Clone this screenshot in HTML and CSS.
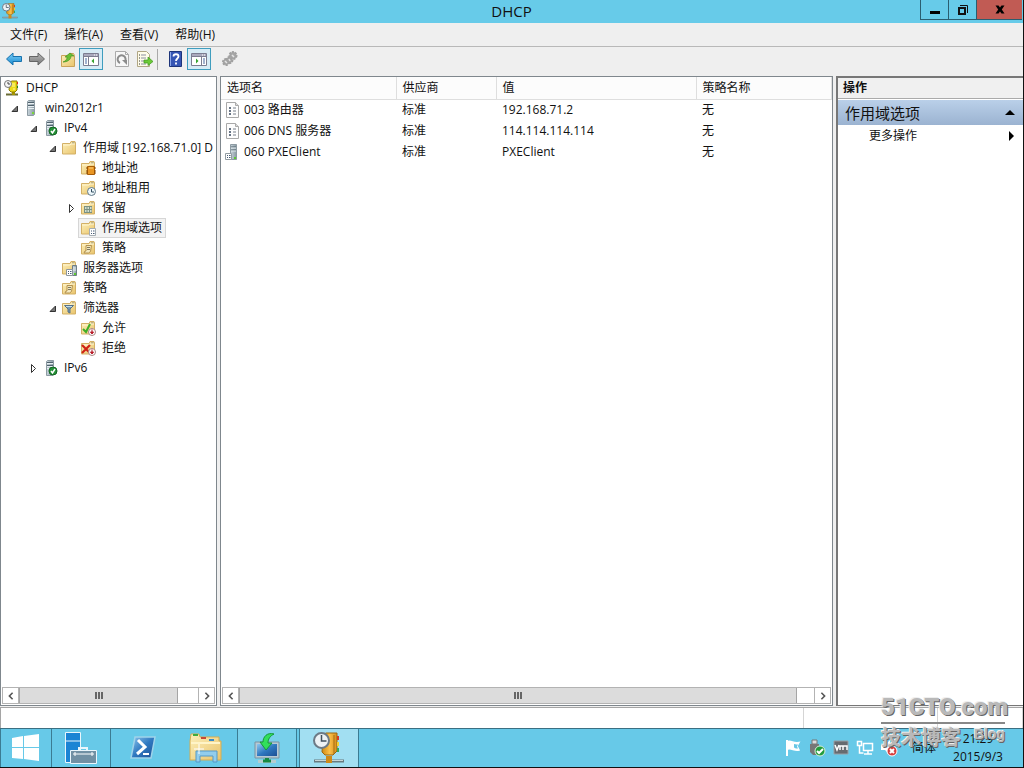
FILE: index.html
```html
<!DOCTYPE html>
<html lang="zh-CN">
<head>
<meta charset="utf-8">
<title>DHCP</title>
<link rel="stylesheet" href="styles.css">
</head>
<body>
<svg class="defs" aria-hidden="true">
  <defs>
    <linearGradient id="gold" x1="0" y1="0" x2="1" y2="1"><stop offset="0" stop-color="#fdf0bb"/><stop offset="1" stop-color="#e9c46c"/></linearGradient>
    <linearGradient id="steel" x1="0" y1="0" x2="1" y2="0"><stop offset="0" stop-color="#c9d5dc"/><stop offset="1" stop-color="#8a9aa3"/></linearGradient>
    <linearGradient id="amber" x1="0" y1="0" x2="1" y2="0"><stop offset="0" stop-color="#d08a12"/><stop offset=".5" stop-color="#fbc04a"/><stop offset="1" stop-color="#d58d1a"/></linearGradient>
    <linearGradient id="blue" x1="0" y1="0" x2="1" y2="1"><stop offset="0" stop-color="#8fc7ee"/><stop offset=".5" stop-color="#2f78c0"/><stop offset="1" stop-color="#1c4f94"/></linearGradient>
    <linearGradient id="sky" x1="0" y1="0" x2="0" y2="1"><stop offset="0" stop-color="#7fd0f8"/><stop offset="1" stop-color="#1488cf"/></linearGradient>
    <linearGradient id="grey" x1="0" y1="0" x2="0" y2="1"><stop offset="0" stop-color="#b8b8b8"/><stop offset="1" stop-color="#777"/></linearGradient>
  </defs>
  <symbol id="folder" viewBox="0 0 16 16"><path d="M1.500 3.500h7.500l1-2h4l.5 1.500v11h-13z" fill="url(#gold)" stroke="#d3b066"/><path d="M11 3h2.500" stroke="#8b8a72"/><path d="M2 5h7l1-1h4" stroke="#fff6d2" fill="none"/></symbol>
  <symbol id="server" viewBox="0 0 16 16"><path d="M4.500 1.500l1-1h6v14l-1 1h-6z" fill="url(#steel)" stroke="#8d9ba3"/><path d="M5 2.500h6M5 5.500h6" stroke="#50626d"/><path d="M5 3.500h6M5 6.500h6M5 8.500h6" stroke="#e8eff2"/><rect x="9" y="12" width="2" height="2" fill="#7ad63c"/></symbol>
  <symbol id="ok" viewBox="0 0 16 16"><circle cx="11" cy="11" r="4" fill="#259238" stroke="#126522"/><path d="M9 11l1.500 2 2.500-4" fill="none" stroke="#fff" stroke-width="1.500"/></symbol>
  <symbol id="server-ok" viewBox="0 0 16 16"><use href="#server" width="16" height="16"/><use href="#ok" width="16" height="16"/></symbol>
  <symbol id="dhcp" viewBox="0 0 32 32"><path d="M1 29h30" stroke="#687b80" stroke-width="3"/><path d="M2 28.500h28" stroke="#c7d6d8"/><path d="M13 24h6v7h-6z" fill="#cf8a18"/><path d="M10 3l3-2h11v18l-4 4h-8l-3-3z" fill="url(#amber)" stroke="#9a6612"/><path d="M21 3v19" stroke="#a36d12"/><path d="M24 4h2v4h-2z" fill="#d83a24"/><path d="M24 10h2v4h-2z" fill="#f1d234"/><path d="M24 16h2v4h-2z" fill="#35a85b"/><circle cx="8.500" cy="8.500" r="7.500" fill="#edf2f5" stroke="#6c7a86" stroke-width="2"/><path d="M8.500 3v6h5" stroke="#40505d" stroke-width="1.500" fill="none"/></symbol>
  <symbol id="dhcp-small" viewBox="0 0 16 16"><path d="M2 14.500h12" stroke="#6a6c36" stroke-width="2"/><path d="M8 11h3v4H8z" fill="#a49400"/><path d="M6 2l2-1h5v9l-2 2H7l-2-2z" fill="#eddb19" stroke="#8d7c00"/><path d="M8 4h3M8 6h3M9 9h2" stroke="#fff9a0"/><path d="M13 2h1v2h-1z" fill="#d22"/><path d="M13 6h1v2h-1z" fill="#282"/><circle cx="4" cy="4" r="3.500" fill="#f6f6f6" stroke="#777"/><path d="M4 2v2h2" fill="none" stroke="#444"/></symbol>
  <symbol id="folder-pool" viewBox="0 0 16 16"><use href="#folder" width="16" height="16"/><path d="M7.500 6.500h7v8h-7z" fill="#e99623" stroke="#a85c08"/><path d="M6 8h2M6 11h2M6 13h2M14 8h2M14 11h2M14 13h2" stroke="#8a4a05"/><path d="M9 8h4" stroke="#ffd27c"/></symbol>
  <symbol id="folder-clock" viewBox="0 0 16 16"><use href="#folder" width="16" height="16"/><circle cx="11.500" cy="11.500" r="4" fill="#edf7fb" stroke="#607987"/><path d="M11.500 9v3H14" fill="none" stroke="#334e60"/></symbol>
  <symbol id="folder-grid" viewBox="0 0 16 16"><use href="#folder" width="16" height="16"/><path d="M4 6h8v7H4z" fill="#7b9182"/><path d="M5 8h1.500M7.500 8H9M10 8h1.500M5 11h1.500M7.500 11H9M10 11h1.500" stroke="#f0f8e6" stroke-width="1.500"/></symbol>
  <symbol id="folder-list" viewBox="0 0 16 16"><use href="#folder" width="16" height="16"/><path d="M9.500 8.500h6v7h-6z" fill="#fff" stroke="#a5adb3"/><path d="M11 11h1M13 11h1.500M11 13.500h1M13 13.500h1.500" stroke="#465b75" stroke-width="1.200"/></symbol>
  <symbol id="folder-server" viewBox="0 0 16 16"><use href="#folder" width="16" height="16"/><path d="M11.500 5.500h4v10h-4z" fill="url(#steel)" stroke="#6f7f88"/><path d="M12 8h3M12 10h3" stroke="#e7f0f3"/><path d="M5.500 9.500h6v6h-6z" fill="#fff" stroke="#8c969d"/><path d="M7 11.500h1M9 11.500h1.500M7 13.500h1M9 13.500h1.500" stroke="#465b75"/><path d="M13 14h2" stroke="#5cca32" stroke-width="2"/></symbol>
  <symbol id="folder-policy" viewBox="0 0 16 16"><use href="#folder" width="16" height="16"/><path d="M6 5.500h5.500l-1 6-2 1.500H4l1-2h1z" fill="#f4e8bd" stroke="#b3914f"/><path d="M7 7.500h3M7 9.500h3" stroke="#7f795f"/></symbol>
  <symbol id="folder-filter" viewBox="0 0 16 16"><use href="#folder" width="16" height="16"/><path d="M3.500 5.500h9L9 9v4l-2-1V9z" fill="#7697ad" stroke="#567287"/><path d="M5 6.500h6" stroke="#c4dce9"/></symbol>
  <symbol id="down-badge" viewBox="0 0 16 16"><circle cx="12" cy="12" r="3.500" fill="#fff" stroke="#a98583"/><path d="M12 9.500v3M10.500 12h3l-1.500 2z" stroke="#b71825" fill="#b71825"/></symbol>
  <symbol id="folder-allow" viewBox="0 0 16 16"><use href="#folder" width="16" height="16"/><path d="M3 9l3 3 4-8" fill="none" stroke="#3fae27" stroke-width="2"/><use href="#down-badge" width="16" height="16"/></symbol>
  <symbol id="folder-deny" viewBox="0 0 16 16"><use href="#folder" width="16" height="16"/><path d="M2 5l8 8M10 5l-8 8" stroke="#cf2115" stroke-width="2.200"/><use href="#down-badge" width="16" height="16"/></symbol>
  <symbol id="option" viewBox="0 0 16 16"><path d="M1.500.5h9l3 3v12h-12z" fill="#fdfdfd" stroke="#a9a9a9"/><path d="M10.500.5v3h3" fill="#ddd" stroke="#aaa"/><path d="M4 6h2M4 9h2M4 12h2" stroke="#36475f" stroke-width="1.500"/><path d="M8 6h3M8 9h3M8 12h3" stroke="#767e8a"/></symbol>
  <symbol id="option-server" viewBox="0 0 16 16"><path d="M5.500.5h6v15h-6z" fill="url(#steel)" stroke="#8d9ba3"/><path d="M6 3h5M6 6h5" stroke="#50626d"/><path d="M6 4h5M6 7h5" stroke="#e4edf1"/><path d="M.5 9.500h6v6h-6z" fill="#fff" stroke="#939da3"/><path d="M2 11.500h1M4 11.500h1.500M2 13.500h1M4 13.500h1.500" stroke="#465b75"/><path d="M9 14h2" stroke="#5cca32" stroke-width="2"/></symbol>
  <symbol id="arrow" viewBox="0 0 18 16"><path d="M1.500 8l6.500-6v3.500h8.500v5H8V14z"/></symbol>
  <symbol id="open" viewBox="0 0 9 9"><path d="M7.500 2v5.500H2z"/></symbol>
  <symbol id="closed" viewBox="0 0 9 9"><path d="M2.500.5l4 4-4 4z"/></symbol>
  <symbol id="window" viewBox="0 0 18 16"><path d="M1.500 2.500h15v12h-15z" fill="#fff" stroke="#7c7d91"/><path d="M2 4h14" stroke="#aaa9bd" stroke-width="2"/><path d="M12 4h1M14 4h1" stroke="#fff"/><path d="M2 5.500h14" stroke="#7c7d91"/></symbol>
</svg>

<div class="desktop">
  <header class="titlebar">
    <svg class="app-icon"><use href="#dhcp"/></svg>
    <h1 class="title">DHCP</h1>
    <div class="window-buttons">
      <button class="win-btn" aria-label="最小化"><svg viewBox="0 0 12 12"><path d="M1 7h10v3H1z"/></svg></button>
      <button class="win-btn" aria-label="还原"><svg viewBox="0 0 12 12" fill="none" stroke="#111"><path d="M2 4h6v6H2z" stroke-width="2"/><path d="M3 1.500h7.500V9"/></svg></button>
      <button class="win-btn close" aria-label="关闭"><svg viewBox="0 0 12 12"><path d="M1.500 1.500h3L6 3.500l1.500-2h3L7.800 5.500l2.700 4h-3L6 7.500l-1.500 2h-3l2.700-4z"/></svg></button>
    </div>
  </header>

  <nav class="menubar">
    <button>文件(F)</button><button>操作(A)</button><button>查看(V)</button><button>帮助(H)</button>
  </nav>

  <div class="toolbar">
    <button class="tool" aria-label="后退"><svg viewBox="0 0 18 16" fill="url(#sky)" stroke="#1972ad"><use href="#arrow"/></svg></button>
    <button class="tool" aria-label="前进"><svg viewBox="0 0 18 16" fill="url(#grey)" stroke="#666"><g transform="translate(18 0) scale(-1 1)"><use href="#arrow"/></g></svg></button>
    <span class="divider"></span>
    <button class="tool" aria-label="向上一级"><svg viewBox="0 0 18 16"><path d="M2.500 4.500h7l1-2h4l1 2v11h-13z" fill="url(#gold)" stroke="#c9a35a"/><path d="M4 11c3-1 4-3 4-5H6l5-4 4 3h-3c0 4-4 6-8 6z" fill="#68bf33" stroke="#3b8c1c" stroke-width=".6"/></svg></button>
    <button class="tool pressed" aria-label="显示/隐藏控制台树"><svg viewBox="0 0 18 16"><use href="#window" width="18" height="16"/><path d="M6.500 6v8" stroke="#7c7d91"/><path d="M3 8h2M3 10h2M3 12h2" stroke="#47669f"/><path d="M12 7.500v5L9.500 10z" fill="#36a22d"/></svg></button>
    <span class="space"></span>
    <button class="tool" aria-label="刷新"><svg viewBox="0 0 18 16"><path d="M2.500.5h10l3 3v12h-13z" fill="#f7f7f7" stroke="#aaa"/><path d="M12.500.5v3h3" fill="none" stroke="#aaa"/><path d="M7 12A4 4 0 1 1 12 10.500" fill="none" stroke="#8c8c8c" stroke-width="2"/><path d="M9 9h5v5z" fill="#8c8c8c"/></svg></button>
    <button class="tool" aria-label="导出列表"><svg viewBox="0 0 18 16"><path d="M1.500.5h9l3 3v12h-12z" fill="#fffce9" stroke="#b0a684"/><path d="M3 4h1M3 7h1M3 10h1M3 13h1" stroke="#333"/><path d="M5 4h5M5 7h5M5 10h4M5 13h5" stroke="#8b8fa0"/><path d="M8 9h4V6l5 4.500-5 4V12H8z" fill="#6cca37" stroke="#3e981c" stroke-width=".7"/></svg></button>
    <span class="divider"></span>
    <button class="tool" aria-label="帮助"><svg viewBox="0 0 18 16"><path d="M2.500.5h12v15h-12z" fill="#3555b4" stroke="#1d3479"/><path d="M3.500 1v14" stroke="#8ba6e8"/><path d="M6.500 5.500c0-3 5-3 5 0 0 2-2.500 2-2.500 4.500M9 11.500v2" fill="none" stroke="#fff" stroke-width="1.800"/></svg></button>
    <button class="tool pressed" aria-label="显示/隐藏操作窗格"><svg viewBox="0 0 18 16"><use href="#window" width="18" height="16"/><path d="M11.500 6v8" stroke="#7c7d91"/><path d="M13 8h2M13 10h2M13 12h2" stroke="#47669f"/><path d="M6 7.500v5L8.500 10z" fill="#36a22d"/></svg></button>
    <span class="space"></span>
    <button class="tool" aria-label="配置选项"><svg viewBox="0 0 18 16"><g fill="#a6a6a6" stroke="#a0a0a0" stroke-dasharray="2 1" stroke-width="2"><circle cx="5" cy="11" r="3"/><circle cx="8.500" cy="9" r="3"/><circle cx="12" cy="4.500" r="3.500"/></g><path d="M4 10l2 2M11 4l2 2M8 8l1 2" stroke="#e4e4e4" stroke-width="1.500"/></svg></button>
  </div>

  <main class="panes">
    <section class="pane tree-pane">
      <ul class="tree">
        <li><div class="node root"><svg class="icon"><use href="#dhcp-small"/></svg><span class="label">DHCP</span></div>
          <ul class="first">
            <li><div class="node"><button class="twisty" aria-label="折叠"><svg><use href="#open"/></svg></button><svg class="icon"><use href="#server"/></svg><span class="label">win2012r1</span></div>
              <ul>
                <li><div class="node"><button class="twisty" aria-label="折叠"><svg><use href="#open"/></svg></button><svg class="icon"><use href="#server-ok"/></svg><span class="label">IPv4</span></div>
                  <ul>
                    <li><div class="node"><button class="twisty" aria-label="折叠"><svg><use href="#open"/></svg></button><svg class="icon"><use href="#folder"/></svg><span class="label">作用域 [192.168.71.0] D</span></div>
                      <ul>
                        <li><div class="node"><span class="twisty"></span><svg class="icon"><use href="#folder-pool"/></svg><span class="label">地址池</span></div></li>
                        <li><div class="node"><span class="twisty"></span><svg class="icon"><use href="#folder-clock"/></svg><span class="label">地址租用</span></div></li>
                        <li><div class="node"><button class="twisty closed" aria-label="展开"><svg><use href="#closed"/></svg></button><svg class="icon"><use href="#folder-grid"/></svg><span class="label">保留</span></div></li>
                        <li><div class="node"><span class="twisty"></span><span class="selected"><svg class="icon"><use href="#folder-list"/></svg><span class="label">作用域选项</span></span></div></li>
                        <li><div class="node"><span class="twisty"></span><svg class="icon"><use href="#folder-policy"/></svg><span class="label">策略</span></div></li>
                      </ul>
                    </li>
                    <li><div class="node"><span class="twisty"></span><svg class="icon"><use href="#folder-server"/></svg><span class="label">服务器选项</span></div></li>
                    <li><div class="node"><span class="twisty"></span><svg class="icon"><use href="#folder-policy"/></svg><span class="label">策略</span></div></li>
                    <li><div class="node"><button class="twisty" aria-label="折叠"><svg><use href="#open"/></svg></button><svg class="icon"><use href="#folder-filter"/></svg><span class="label">筛选器</span></div>
                      <ul>
                        <li><div class="node"><span class="twisty"></span><svg class="icon"><use href="#folder-allow"/></svg><span class="label">允许</span></div></li>
                        <li><div class="node"><span class="twisty"></span><svg class="icon"><use href="#folder-deny"/></svg><span class="label">拒绝</span></div></li>
                      </ul>
                    </li>
                  </ul>
                </li>
                <li><div class="node"><button class="twisty closed" aria-label="展开"><svg><use href="#closed"/></svg></button><svg class="icon"><use href="#server-ok"/></svg><span class="label">IPv6</span></div></li>
              </ul>
            </li>
          </ul>
        </li>
      </ul>
      <div class="scrollbar">
        <button aria-label="向左滚动"><svg viewBox="0 0 8 10"><path d="M6 1L2 5l4 4"/></svg></button>
        <div class="track"><div class="thumb"><i></i><i></i><i></i></div></div>
        <button aria-label="向右滚动"><svg viewBox="0 0 8 10"><path d="M2 1l4 4-4 4"/></svg></button>
      </div>
    </section>

    <section class="pane list-pane">
      <table class="list">
        <colgroup><col class="c-name"><col class="c-vendor"><col class="c-value"><col></colgroup>
        <thead><tr><th>选项名</th><th>供应商</th><th>值</th><th>策略名称</th></tr></thead>
        <tbody>
          <tr><td class="name"><svg class="icon"><use href="#option"/></svg>003 路由器</td><td>标准</td><td>192.168.71.2</td><td>无</td></tr>
          <tr><td class="name"><svg class="icon"><use href="#option"/></svg>006 DNS 服务器</td><td>标准</td><td>114.114.114.114</td><td>无</td></tr>
          <tr><td class="name"><svg class="icon"><use href="#option-server"/></svg>060 PXEClient</td><td>标准</td><td>PXEClient</td><td>无</td></tr>
        </tbody>
      </table>
      <div class="scrollbar">
        <button aria-label="向左滚动"><svg viewBox="0 0 8 10"><path d="M6 1L2 5l4 4"/></svg></button>
        <div class="track"><div class="thumb"><i></i><i></i><i></i></div></div>
        <button aria-label="向右滚动"><svg viewBox="0 0 8 10"><path d="M2 1l4 4-4 4"/></svg></button>
      </div>
    </section>

    <aside class="actions">
      <h2 class="actions-title">操作</h2>
      <button class="group">作用域选项<svg viewBox="0 0 10 6"><path d="M5 0l5 5H0z"/></svg></button>
      <button class="more">更多操作<svg viewBox="0 0 6 10"><path d="M0 0l5 5-5 5z"/></svg></button>
    </aside>
  </main>

  <div class="statusbar"><span class="status-main"></span><span class="status-side"></span><span class="status-end"></span></div>

  <footer class="taskbar">
    <button class="task start" aria-label="开始"><svg width="28" height="28" viewBox="0 0 28 28" fill="#fff"><path d="M0 4l11-2v11H0zM12 2l15-2v13H12zM0 14h11v11L0 24zM12 14h15v13l-15-2z"/></svg></button>
    <button class="task running" aria-label="服务器管理器"><svg width="34" height="34" viewBox="0 0 34 34"><path d="M1.500 1.500h15v30h-15z" fill="#1b84d4" stroke="#eaf6fc"/><path d="M2 10h14" stroke="#eaf6fc"/><path d="M15 19v-2h8v2" fill="none" stroke="#eaf6fc" stroke-width="2"/><path d="M6.500 19.500h26v13h-26z" fill="#7190a4" stroke="#eaf6fc"/><path d="M9 23h21M11 21v4M28 21v4" stroke="#fff"/></svg></button>
    <button class="task" aria-label="PowerShell"><svg width="30" height="26" viewBox="0 0 30 26"><path d="M7 2h20l-4 21H3z" fill="url(#blue)" stroke="#9fd3ea" stroke-width="1.500"/><path d="M10 5l7 7-8 7" fill="none" stroke="#fff" stroke-width="3"/><path d="M15 19h6" stroke="#fff" stroke-width="2"/></svg></button>
    <button class="task" aria-label="文件资源管理器"><svg width="36" height="32" viewBox="0 0 36 32"><path d="M3 2h8l1 3h19v4h2v19H2V9z" fill="url(#gold)" stroke="#d6ad50"/><path d="M5 3h5" stroke="#3fac3f" stroke-width="2"/><path d="M13 6h5" stroke="#c74835" stroke-width="2"/><path d="M21 8h5" stroke="#388bc9" stroke-width="2"/><path d="M3 11h29" stroke="#fff4c7" stroke-width="2"/><path d="M8 30V19h21v11h-4v-6H12v6z" fill="#92cdec" stroke="#5599c7"/><path d="M11 12v10M6 17h10" stroke="#fff"/></svg></button>
    <button class="task lit" aria-label="部署服务"><svg width="26" height="32" viewBox="0 0 26 32"><path d="M1 10h24v16H1z" fill="#b7c9d4" stroke="#7b94a3"/><path d="M3 12h20v12H3z" fill="url(#blue)"/><path d="M13 26v4" stroke="#168942" stroke-width="4"/><path d="M4 29.500h18" stroke="#b5cdd0" stroke-width="3"/><path d="M9 29h8" stroke="#168942" stroke-width="3"/><path d="M20 2c-7-2-11 3-11 8H6l6 8 6-7h-4c0-4 2-7 6-9z" fill="#31df5b" stroke="#16963a"/></svg></button>
    <button class="task active" aria-label="DHCP"><svg width="32" height="32"><use href="#dhcp"/></svg></button>
    <div class="tray">
      <svg viewBox="0 0 18 18"><path d="M3 1v16" stroke="#fff" stroke-width="2"/><path d="M4 2.500c4-1 5 2 11 1L13 7l2 4c-5 1-7-2-11-1z" fill="#fff" stroke="#fff" stroke-width="1.500"/><path d="M10 5c2 .5 3 .5 4 .5l-1 2 1 2c-1 0-3 0-4-1z" fill="#67c6e5"/></svg>
      <svg viewBox="0 0 18 18"><path d="M4 1h5v4H4z" fill="#ddd" stroke="#777"/><path d="M2 5h9v8l-3 3H5l-3-3z" fill="#777"/><circle cx="12" cy="12" r="5" fill="#229c3b" stroke="#d8efdb"/><path d="M9 12l2 2 4-4" stroke="#fff" fill="none" stroke-width="2"/></svg>
      <svg viewBox="0 0 18 18"><path d="M2 2h14v13H2z" fill="#666b70" stroke="#9ba1a6"/><path d="M3 6l2 5 2-5M8 11V7h3v4M11 7h4v4" fill="none" stroke="#fff" stroke-width="1.500"/></svg>
      <svg viewBox="0 0 18 18"><path d="M1.500 2.500h4v4h-4zM3.500 6v8h4M7.500 4.500h9v7h-9zM12 12v3M8 15h8" fill="none" stroke="#fff" stroke-width="1.500"/></svg>
      <svg viewBox="0 0 18 18"><path d="M1 6h4l5-5v15l-5-5H1z" fill="#fff"/><circle cx="12" cy="12" r="5" fill="#d73d3b" stroke="#fff"/><path d="M10 10l4 4M14 10l-4 4" stroke="#fff" stroke-width="2"/></svg>
      <span class="ime">简体</span>
      <div class="clock"><time>21:29</time><time>2015/9/3</time></div>
    </div>
  </footer>

  <div class="watermark" aria-hidden="true">
    <div class="mark-site">51CTO.com</div>
    <div class="mark-row"><span class="mark-name">技术博客</span><span class="mark-blog">Blog</span></div>
  </div>
</div>
</body>
</html>
```
FILE: styles.css
```css
* { box-sizing: border-box; }

body {
  margin: 0;
  background: #efefef;
  color: #111;
  font: 12px/20px "Open Sans", "Noto Sans CJK SC", sans-serif;
}

button {
  margin: 0;
  padding: 0;
  border: 0;
  background: none;
  color: inherit;
  font: inherit;
}

ul { margin: 0; padding: 0; list-style: none; }

.defs { position: absolute; width: 0; height: 0; }

.icon { width: 16px; height: 16px; flex: none; }

.desktop {
  position: relative;
  display: flex;
  flex-direction: column;
  min-height: 100vh;
  border-right: 1px solid #111;
  border-bottom: 1px solid #111;
}

/* Title bar */
.titlebar {
  display: grid;
  grid-template-columns: 1fr auto 1fr;
  align-items: start;
  height: 23px;
  background: #67cbe9;
}

.app-icon { width: 16px; height: 16px; margin: 3px 2px; }

.title { margin: 0; font-size: 15px; line-height: 23px; font-weight: 400; }

.window-buttons { display: flex; justify-content: flex-end; padding-right: 1px; }

.win-btn {
  display: flex;
  justify-content: center;
  align-items: center;
  width: 28px;
  height: 20px;
  border: 1px solid #2a5e70;
  border-top: 0;
  border-right: 0;
}

.win-btn svg { width: 12px; height: 12px; }

.win-btn.close { width: 46px; background: #c15b54; }

/* Menus and tools */
.menubar {
  display: flex;
  gap: 17px;
  height: 24px;
  padding-left: 10px;
  border-bottom: 1px solid #b8b8b8;
  line-height: 23px;
}

.toolbar {
  display: flex;
  align-items: center;
  height: 29px;
  padding: 0 0 5px 2px;
}

.tool {
  display: flex;
  justify-content: center;
  align-items: center;
  width: 23px;
  height: 22px;
}

.tool svg { width: 18px; height: 16px; }

.tool.pressed { width: 24px; border: 1px solid #3f9dbe; background: #d7ebf5; }

.divider { width: 1px; height: 21px; margin: 0 6px 0 1px; background: #a9a9a9; }

.space { width: 7px; }

/* Panes */
.panes {
  display: grid;
  grid-template-columns: 217px minmax(0, 1fr) 187px;
  column-gap: 3px;
  flex: 1;
}

.pane {
  display: flex;
  flex-direction: column;
  min-width: 0;
  border: 1px solid #7f878d;
  background: #fff;
}

.tree { flex: 1; padding-top: 1px; overflow: hidden; }

.tree ul { padding-left: 19px; }

.tree ul.first { padding-left: 5px; }

.node { display: flex; align-items: center; height: 20px; white-space: nowrap; }

.node.root { padding-left: 3px; }

.label { padding-left: 6px; }

.twisty {
  display: flex;
  justify-content: center;
  align-items: center;
  width: 16px;
  height: 16px;
  margin-right: 1px;
  flex: none;
}

.twisty svg { width: 9px; height: 9px; fill: #777; stroke: #333; }

.twisty.closed svg { fill: #fff; }

.selected {
  display: flex;
  align-items: center;
  height: 20px;
  margin-left: -2px;
  padding: 0 3px 0 1px;
  border: 1px solid #d6d6d6;
  background: #f3f3f3;
}

.scrollbar { display: flex; height: 18px; padding: 0 1px 1px; }

.scrollbar button {
  display: flex;
  justify-content: center;
  align-items: center;
  width: 17px;
  border: 1px solid #b3b3b3;
}

.scrollbar svg { width: 8px; height: 8px; fill: none; stroke: #555; stroke-width: 2; }

.track {
  flex: 1;
  border: 1px solid #b3b3b3;
  border-width: 1px 0;
}

.thumb {
  display: flex;
  justify-content: center;
  align-items: center;
  gap: 1px;
  width: 89%;
  height: 100%;
  border: 1px solid #a5a5a5;
  border-width: 0 1px;
  background: #dcdcdc;
}

.list-pane .thumb { width: 97%; }

.thumb i { width: 2px; height: 7px; background: #666; }

.list-pane { justify-content: space-between; }

.list { width: 100%; border-collapse: collapse; table-layout: fixed; }

.c-name { width: 175px; }

.c-vendor { width: 100px; }

.c-value { width: 200px; }

.list th,
.list td { height: 21px; padding: 0 6px; text-align: left; font-weight: 400; }

.list th {
  height: 22px;
  padding-top: 1px;
  border-right: 1px solid #dedede;
  border-bottom: 1px solid #dedede;
  background: #fcfcfc;
}

.list .name { display: flex; align-items: center; gap: 3px; padding-left: 4px; }

.actions { border: 2px solid #777; border-width: 2px 0 1px 2px; background: #fff; }

.actions-title {
  margin: 0;
  padding-left: 5px;
  border-bottom: 1px solid #aaa;
  background: #f0f0f0;
  font-size: 12px;
  line-height: 20px;
}

.group,
.more {
  display: flex;
  justify-content: space-between;
  align-items: center;
  width: 100%;
}

.group {
  height: 25px;
  margin-top: 1px;
  padding: 0 8px 0 7px;
  background: linear-gradient(#bad0e9, #9bb3d1);
  font-size: 15px;
}

.group svg { width: 10px; height: 6px; }

.more { height: 22px; padding: 0 8px 0 31px; }

.more svg { width: 6px; height: 10px; }

/* Status bar */
.statusbar {
  display: flex;
  height: 21px;
  margin-top: 1px;
  border-top: 1px solid #a5a5a5;
  border-left: 1px solid #a5a5a5;
  background: #fff;
}

.status-main { flex: 1; }

.status-side { width: 134px; border-left: 1px solid #d5d5d5; }

.status-end { width: 86px; border: 1px solid #d5d5d5; border-width: 0 1px; }

/* Taskbar */
.taskbar {
  display: flex;
  height: 39px;
  border-top: 1px solid #3b6f82;
  background: #67c9e8;
}

.task {
  display: flex;
  justify-content: center;
  align-items: center;
  width: 63px;
}

.task.start { width: 51px; border-left: 1px solid #3b7c93; }

.task.running { width: 60px; border: 1px solid #3b7c93; border-width: 0 1px; }

.task.lit { width: 60px; border: 1px solid #3b7c93; border-width: 0 1px; background: #78d0eb; }

.task.active { width: 60px; margin-left: 2px; border: 1px solid #3b7c93; border-width: 0 1px; background: #a2dff2; }

.tray {
  display: flex;
  align-items: center;
  gap: 6px;
  margin-left: auto;
  padding-right: 19px;
}

.tray svg { width: 18px; height: 18px; }

.ime { padding: 0 10px 0 8px; }

.clock { display: grid; min-width: 52px; line-height: 18px; text-align: center; }

/* Corner mark */
.watermark {
  position: absolute;
  right: 18px;
  bottom: 16px;
  width: 124px;
  color: #b9b9b9;
  font-weight: 700;
  text-shadow: 1px 1px #666, -1px -1px #eee;
  white-space: nowrap;
  pointer-events: none;
}

.mark-site {
  border-bottom: 2px solid #888;
  font-family: Roboto, "Liberation Sans", sans-serif;
  font-size: 24px;
  font-weight: 900;
  line-height: 30px;
}

.mark-row { display: flex; justify-content: space-between; align-items: flex-start; }

.mark-name { font-size: 20px; line-height: 27px; }

.mark-blog { font-family: "Liberation Sans", sans-serif; font-size: 14px; line-height: 20px; }
```
